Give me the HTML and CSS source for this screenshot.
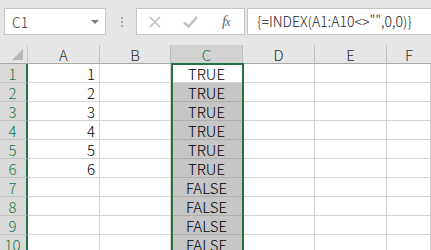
FILE: index.html
```html
<!DOCTYPE html>
<html lang="zh-CN">
<head>
    <meta charset="UTF-8">
    <title>Excel - INDEX</title>
    <link rel="stylesheet" href="styles.css">
</head>
<body>
    <div class="toolbar">
        <div class="namebox">
            <span>C1</span>
            <svg class="caret" width="8" height="4" viewBox="0 0 8 4"><path d="M0 0h8L4 4z" fill="#7a7a7a"/></svg>
        </div>
        <svg class="dots" width="3" height="10" viewBox="0 0 3 10">
            <rect x="0" y="0" width="2" height="2" fill="#a8a8a8"/>
            <rect x="0" y="4" width="2" height="2" fill="#a8a8a8"/>
            <rect x="0" y="8" width="2" height="2" fill="#a8a8a8"/>
        </svg>
        <div class="fbtns">
            <svg width="12" height="12" viewBox="0 0 12 12"><path d="M1 1l10 10M11 1L1 11" stroke="#bdbdbd" stroke-width="1.6"/></svg>
            <svg width="15" height="12" viewBox="0 0 15 12"><path d="M1 6.5l4.5 4L14 1" stroke="#bdbdbd" stroke-width="2.4" fill="none"/></svg>
            <span class="fx">f<i>x</i></span>
        </div>
        <div class="formula">{=INDEX(A1:A10&lt;&gt;"",0,0)}</div>
    </div>

    <div class="sheet">
        <div class="grid">
            <div class="corner"><svg width="11" height="11" viewBox="0 0 11 11"><path d="M11 0V11H0z" fill="#b8b8b8"/></svg></div>
            <div class="colhead">A</div>
            <div class="colhead">B</div>
            <div class="colhead sel">C</div>
            <div class="colhead">D</div>
            <div class="colhead">E</div>
            <div class="colhead last">F</div>

            <div class="rowhead">1</div><div class="cell num">1</div><div class="cell"></div><div class="cell c active">TRUE</div><div class="cell"></div><div class="cell"></div><div class="cell"></div>
            <div class="rowhead">2</div><div class="cell num">2</div><div class="cell"></div><div class="cell c">TRUE</div><div class="cell"></div><div class="cell"></div><div class="cell"></div>
            <div class="rowhead">3</div><div class="cell num">3</div><div class="cell"></div><div class="cell c">TRUE</div><div class="cell"></div><div class="cell"></div><div class="cell"></div>
            <div class="rowhead">4</div><div class="cell num">4</div><div class="cell"></div><div class="cell c">TRUE</div><div class="cell"></div><div class="cell"></div><div class="cell"></div>
            <div class="rowhead">5</div><div class="cell num">5</div><div class="cell"></div><div class="cell c">TRUE</div><div class="cell"></div><div class="cell"></div><div class="cell"></div>
            <div class="rowhead">6</div><div class="cell num">6</div><div class="cell"></div><div class="cell c">TRUE</div><div class="cell"></div><div class="cell"></div><div class="cell"></div>
            <div class="rowhead">7</div><div class="cell num"></div><div class="cell"></div><div class="cell c">FALSE</div><div class="cell"></div><div class="cell"></div><div class="cell"></div>
            <div class="rowhead">8</div><div class="cell num"></div><div class="cell"></div><div class="cell c">FALSE</div><div class="cell"></div><div class="cell"></div><div class="cell"></div>
            <div class="rowhead">9</div><div class="cell num"></div><div class="cell"></div><div class="cell c">FALSE</div><div class="cell"></div><div class="cell"></div><div class="cell"></div>
            <div class="rowhead">10</div><div class="cell num"></div><div class="cell"></div><div class="cell c">FALSE</div><div class="cell"></div><div class="cell"></div><div class="cell"></div>
        </div>
        <div class="selection"></div>
    </div>
</body>
</html>
```

FILE: styles.css
```css
body {
    margin: 0;
    width: 431px;
    height: 250px;
    overflow: hidden;
    background-color: #ffffff;
    font-family: "Noto Sans CJK SC", "Liberation Sans", sans-serif;
    font-weight: 300;
}

.toolbar {
    height: 45px;
    box-sizing: border-box;
    padding: 8px 0 0 4px;
    background-color: #e6e6e6;
    display: flex;
    align-items: flex-start;
}

.namebox {
    width: 102px;
    height: 27px;
    box-sizing: border-box;
    border: 1px solid #c6c6c6;
    background-color: #ffffff;
    display: flex;
    align-items: center;
    justify-content: space-between;
    padding: 0 6px 0 7px;
    font-size: 14px;
    color: #333333;
}

.namebox span {
    line-height: 1;
}

.dots {
    margin: 9px 0 0 15px;
}

.fbtns {
    margin-left: 12px;
    width: 109px;
    height: 27px;
    box-sizing: border-box;
    border: 1px solid #c6c6c6;
    background-color: #ffffff;
    display: flex;
    align-items: center;
    padding-left: 12px;
    gap: 22px;
}

.fx {
    font-family: "Liberation Serif", serif;
    font-style: italic;
    font-size: 15px;
    color: #666666;
    letter-spacing: -1px;
    margin-left: 2px;
}

.fx i {
    font-size: 12px;
}

.formula {
    margin-left: 2px;
    flex: 1;
    height: 27px;
    box-sizing: border-box;
    border: 1px solid #c6c6c6;
    border-right: none;
    background-color: #ffffff;
    padding-left: 9px;
    font-size: 14px;
    line-height: 25px;
    color: #222222;
    white-space: nowrap;
}

.sheet {
    position: relative;
    height: 205px;
    overflow: hidden;
}

.grid {
    display: grid;
    grid-template-columns: 28px 72px 71px 72px 72px 72px 1fr;
    grid-auto-rows: 19px;
    font-size: 15px;
}

.grid > div {
    box-sizing: border-box;
    line-height: 19px;
}

.corner {
    background-color: #e6e6e6;
    border-right: 1px solid #c8c8c8;
    border-bottom: 1px solid #a6a6a6;
    display: flex;
    align-items: flex-end;
    justify-content: flex-end;
    padding: 0 4px 3px 0;
}

.colhead {
    background-color: #e6e6e6;
    border-right: 1px solid #c0c0c0;
    border-bottom: 1px solid #a6a6a6;
    text-align: center;
    color: #2b2b2b;
}

.colhead.sel {
    background-color: #d2d2d2;
    color: #217346;
}

.colhead.last {
    border-right: none;
}

.rowhead {
    background-color: #dadada;
    border-right: 2px solid #217346;
    border-bottom: 1px solid #c4c4c4;
    text-align: center;
    color: #217346;
    padding-right: 1px;
}

.cell {
    border-right: 1px solid #d4d4d4;
    border-bottom: 1px solid #d4d4d4;
    color: #000000;
}

.cell.num {
    text-align: right;
    padding-right: 4px;
}

.cell.c {
    background-color: #c6c6c6;
    border-bottom-color: #aeaeae;
    text-align: center;
}

.cell.c.active {
    background-color: #ffffff;
    border-bottom-color: #d4d4d4;
}

.selection {
    position: absolute;
    left: 171px;
    top: 18px;
    width: 73px;
    height: 220px;
    box-sizing: border-box;
    border: 2px solid #217346;
}
```
